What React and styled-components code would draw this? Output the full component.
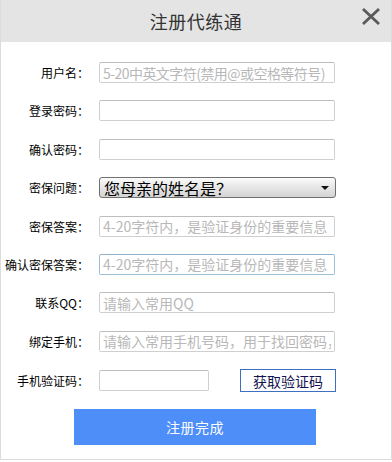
import React from "react";
import styled, { createGlobalStyle } from "styled-components";

const Global = createGlobalStyle`
  html, body { margin: 0; padding: 0; background: #fff; }
  body { font-family: "Noto Sans CJK SC", "Liberation Sans", sans-serif; }
`;

const Dialog = styled.div`
  width: 390px;
  border: 1px solid #dcdcdc;
  border-top: none;
  background: #fff;
`;

const Header = styled.div`
  height: 42px;
  background: #e4e4e4;
  display: flex;
  align-items: center;
  justify-content: center;
  position: relative;
`;

const Title = styled.div`
  font-size: 18px;
  color: #333;
  letter-spacing: 0.5px;
`;

const Close = styled.button`
  position: absolute;
  right: 10px;
  top: 8px;
  width: 20px;
  height: 17px;
  padding: 0;
  border: none;
  background: transparent;
  display: flex;
`;

const Form = styled.div`
  display: flex;
  flex-direction: column;
  gap: 17.375px;
  padding: 20px 0 0 0;
`;

const Row = styled.div`
  display: grid;
  grid-template-columns: 88px auto;
  column-gap: 10px;
  align-items: center;
  height: 21px;
`;

const Label = styled.label`
  font-size: 12px;
  font-weight: 400;
  color: #000;
  text-align: right;
  white-space: nowrap;
`;

const Input = styled.input`
  box-sizing: border-box;
  width: ${(p) => p.$w || 236}px;
  height: 21px;
  border: 1px solid ${(p) => (p.$focus ? "#9dbfd6" : "#cfcfcf")};
  border-top-color: ${(p) => (p.$focus ? "#8fb3cc" : "#bdbdbd")};
  border-radius: 2px;
  padding: 0 3px;
  font-family: "Noto Sans CJK SC", sans-serif;
  font-size: 14px;
  letter-spacing: ${(p) => (p.$tight ? "-0.55px" : "0")};
  color: #333;
  outline: none;
  background: #fff;
  &::placeholder { color: #b8b8b8; }
`;

const InlineGroup = styled.div`
  display: flex;
  align-items: center;
  gap: 31px;
`;

const Select = styled.div`
  box-sizing: border-box;
  width: 237px;
  height: 21px;
  border: 1px solid #707070;
  border-radius: 3px;
  background: linear-gradient(#fbfbfb, #e6e6e6 50%, #d4d4d4);
  display: flex;
  align-items: center;
  justify-content: space-between;
  padding: 0 6px 0 4px;
  font-size: 16px;
  color: #000;
  line-height: 1;
`;

const Arrow = styled.span`
  width: 0;
  height: 0;
  border-left: 4px solid transparent;
  border-right: 4px solid transparent;
  border-top: 4px solid #111;
`;

const CodeButton = styled.button`
  box-sizing: border-box;
  width: 96px;
  height: 23px;
  border: 1px solid #3f6fbf;
  background: #fff;
  color: #141450;
  font-family: "Noto Sans CJK SC", sans-serif;
  font-size: 14px;
  padding: 0;
`;

const Footer = styled.div`
  display: flex;
  justify-content: center;
  padding: 19px 2px 14px 0;
`;

const Submit = styled.button`
  width: 242px;
  height: 36px;
  border: none;
  background: #4d8ef9;
  color: #fff;
  font-family: "Noto Sans CJK SC", sans-serif;
  font-size: 14px;
  letter-spacing: 0.5px;
`;

const fields = [
  { label: "用户名：", ph: "5-20中英文字符(禁用@或空格等符号)", tight: true },
  { label: "登录密码：", ph: "" },
  { label: "确认密码：", ph: "" },
  { label: "密保问题：", select: "您母亲的姓名是？" },
  { label: "密保答案：", ph: "4-20字符内，是验证身份的重要信息" },
  { label: "确认密保答案：", ph: "4-20字符内，是验证身份的重要信息", focus: true },
  { label: "联系QQ：", ph: "请输入常用QQ" },
  { label: "绑定手机：", ph: "请输入常用手机号码，用于找回密码，" },
];

export default function App() {
  return (
    <>
      <Global />
      <Dialog>
        <Header>
          <Title>注册代练通</Title>
          <Close aria-label="关闭">
            <svg width="20" height="17" viewBox="0 0 20 17">
              <path d="M2 1 L18 16 M18 1 L2 16" stroke="#5a5a5a" strokeWidth="2.8" fill="none" />
            </svg>
          </Close>
        </Header>
        <Form>
          {fields.map((f) => (
            <Row key={f.label}>
              <Label>{f.label}</Label>
              {f.select ? (
                <Select>
                  <span>{f.select}</span>
                  <Arrow />
                </Select>
              ) : (
                <Input placeholder={f.ph} $focus={f.focus} $tight={f.tight} />
              )}
            </Row>
          ))}
          <Row>
            <Label>手机验证码：</Label>
            <InlineGroup>
              <Input $w={110} />
              <CodeButton>获取验证码</CodeButton>
            </InlineGroup>
          </Row>
        </Form>
        <Footer>
          <Submit>注册完成</Submit>
        </Footer>
      </Dialog>
    </>
  );
}
